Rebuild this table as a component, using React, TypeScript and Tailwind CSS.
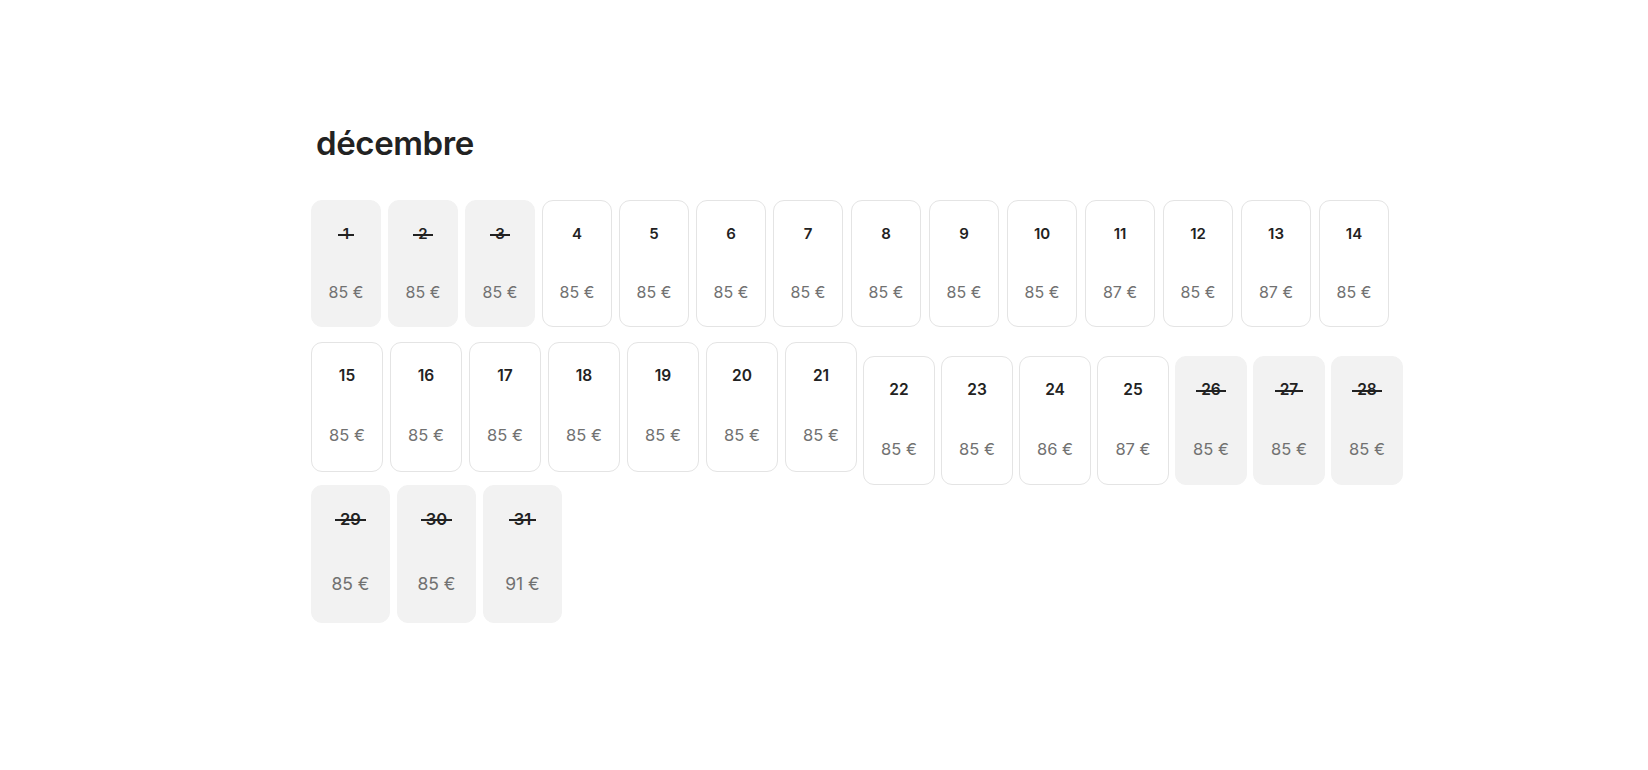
import React from "react";

type Day = { n: number; price: number; off?: boolean };

interface Week {
  days: Day[];
  cardW: string;
  cardH: string;
  gap: string;
  numSize: string;
  priceSize: string;
  numTop: string;
  priceGap: string;
  offset?: string;
}

const d = (n: number, price = 85, off = false): Day => ({ n, price, off });

const weeks: Week[][] = [
  [
    {
      days: [d(1, 85, true), d(2, 85, true), d(3, 85, true), d(4), d(5), d(6), d(7)],
      cardW: "w-[70px]",
      cardH: "h-[127px]",
      gap: "gap-[7px]",
      numSize: "text-[15px]",
      priceSize: "text-[16px]",
      numTop: "pt-[23px]",
      priceGap: "mt-[38px]",
    },
    {
      days: [d(8), d(9), d(10), d(11, 87), d(12), d(13, 87), d(14)],
      cardW: "w-[70px]",
      cardH: "h-[127px]",
      gap: "gap-[8px]",
      numSize: "text-[15px]",
      priceSize: "text-[16px]",
      numTop: "pt-[23px]",
      priceGap: "mt-[38px]",
    },
  ],
  [
    {
      days: [d(15), d(16), d(17), d(18), d(19), d(20), d(21)],
      cardW: "w-[72px]",
      cardH: "h-[130px]",
      gap: "gap-[7px]",
      numSize: "text-[15.5px]",
      priceSize: "text-[16.5px]",
      numTop: "pt-[23px]",
      priceGap: "mt-[39px]",
    },
    {
      days: [d(22), d(23), d(24, 86), d(25, 87), d(26, 85, true), d(27, 85, true), d(28, 85, true)],
      cardW: "w-[72px]",
      cardH: "h-[129px]",
      gap: "gap-[6px]",
      numSize: "text-[15.5px]",
      priceSize: "text-[16.5px]",
      numTop: "pt-[23px]",
      priceGap: "mt-[39px]",
      offset: "mt-[14px]",
    },
  ],
  [
    {
      days: [d(29, 85, true), d(30, 85, true), d(31, 91, true)],
      cardW: "w-[79px]",
      cardH: "h-[138px]",
      gap: "gap-[7px]",
      numSize: "text-[16.5px]",
      priceSize: "text-[17.5px]",
      numTop: "pt-[23px]",
      priceGap: "mt-[45px]",
    },
  ],
];

const rowGaps = ["gap-[8px]", "gap-[6px]", "gap-[8px]"];

function DayCard({ day, w }: { day: Day; w: Week }) {
  return (
    <div
      className={`${w.cardW} ${w.cardH} ${w.numTop} flex flex-col items-center rounded-[11px] ${
        day.off ? "bg-[#f2f2f2] border-[1.5px] border-[#f2f2f2]" : "bg-white border-[1.5px] border-[#e4e4e4]"
      }`}
    >
      <span className={`relative ${w.numSize} font-semibold text-[#222222] leading-5 px-[5px]`}>
        {day.n}
        {day.off && (
          <span className="absolute left-0 right-0 top-1/2 h-[1.5px] bg-[#222222]" />
        )}
      </span>
      <span className={`${w.priceGap} ${w.priceSize} text-[#717171] leading-5`}>
        {day.price} €
      </span>
    </div>
  );
}

export default function App() {
  return (
    <div
      className="min-h-screen bg-white pl-[311px] pt-[123px]"
      style={{ fontFamily: "Inter, 'Noto Sans', sans-serif" }}
    >
      <h2 className="text-[33px] font-semibold text-[#222222] tracking-[-0.4px] leading-[40px] pl-[5px]">
        décembre
      </h2>

      <div className="mt-[37px] flex flex-col">
        {weeks.map((row, ri) => (
          <div key={ri} className={`flex items-start ${rowGaps[ri]} ${ri === 1 ? "mt-[15px]" : ""}`}>
            {row.map((w, wi) => (
              <div key={wi} className={`flex ${w.gap} ${w.offset ?? ""}`}>
                {w.days.map((day) => (
                  <DayCard key={day.n} day={day} w={w} />
                ))}
              </div>
            ))}
          </div>
        ))}
      </div>
    </div>
  );
}
